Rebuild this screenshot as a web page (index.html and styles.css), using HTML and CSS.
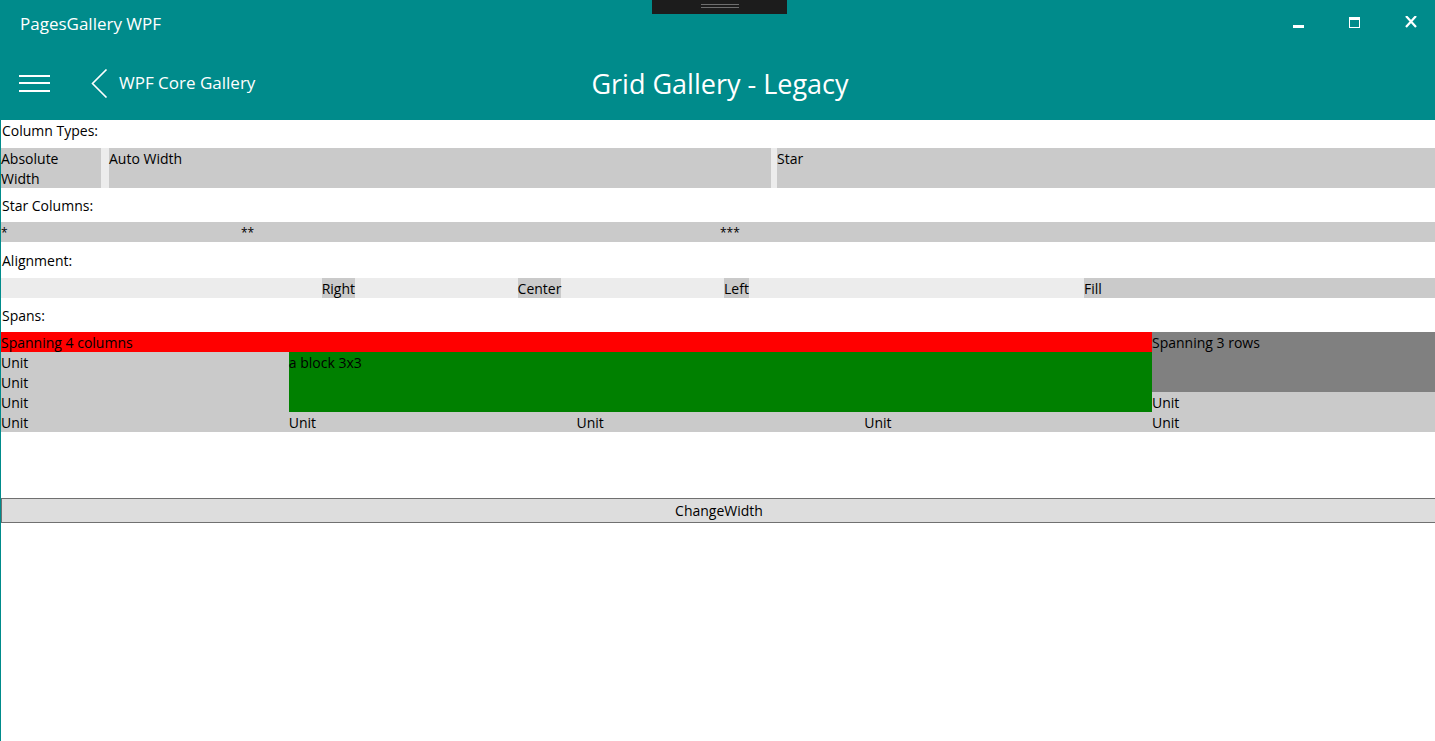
FILE: index.html
```html
<!DOCTYPE html>
<html>
<head>
<meta charset="utf-8">
<title>PagesGallery WPF</title>
<link rel="stylesheet" href="styles.css">
</head>
<body>
<div class="window">
  <header class="chrome">
    <div class="titlebar">
      <span class="app-title">PagesGallery WPF</span>
      <div class="grip"><span class="grip-line"></span><span class="grip-line"></span></div>
      <div class="controls">
        <svg class="ctl" width="12" height="12" viewBox="0 0 12 12"><rect x="0" y="9" width="11" height="3" fill="#fff"/></svg>
        <svg class="ctl" width="12" height="12" viewBox="0 0 12 12"><rect x="0.5" y="1.5" width="10" height="10" fill="none" stroke="#fff" stroke-width="1"/><rect x="0" y="1" width="11" height="3" fill="#fff"/></svg>
        <svg class="ctl" width="12" height="12" viewBox="0 0 12 12"><path d="M1 0 L11 11 M11 0 L1 11" stroke="#fff" stroke-width="2.2" fill="none"/></svg>
      </div>
    </div>
    <div class="navbar">
      <div class="nav-left">
        <svg class="hamburger" width="32" height="18" viewBox="0 0 32 18"><rect x="0" y="0" width="31" height="2" fill="#fff"/><rect x="0" y="7" width="31" height="2" fill="#fff"/><rect x="0" y="15" width="31" height="2" fill="#fff"/></svg>
        <div class="back">
          <svg class="chevron" width="17" height="29" viewBox="0 0 17 29"><polyline points="15.5,0.5 1.5,14.5 15.5,28.5" fill="none" stroke="#fff" stroke-width="1.6"/></svg>
          <span class="back-text">WPF Core Gallery</span>
        </div>
      </div>
      <div class="page-title">Grid Gallery - Legacy</div>
      <div class="nav-right"></div>
    </div>
  </header>
  <main class="content">
    <div class="label label-first">Column Types:</div>
    <div class="coltypes">
      <div class="cell cell-abs">Absolute Width</div>
      <div class="cell cell-auto">Auto Width</div>
      <div class="cell cell-star">Star</div>
    </div>
    <div class="label">Star Columns:</div>
    <div class="stars">
      <div class="txt">*</div>
      <div class="txt">**</div>
      <div class="txt">***</div>
    </div>
    <div class="label label-align">Alignment:</div>
    <div class="align">
      <div class="al al-right"><span class="chip">Right</span></div>
      <div class="al al-center"><span class="chip">Center</span></div>
      <div class="al al-left"><span class="chip">Left</span></div>
      <div class="al al-fill"><span class="chip">Fill</span></div>
    </div>
    <div class="label">Spans:</div>
    <div class="spans">
      <div class="txt sp-red">Spanning 4 columns</div>
      <div class="txt sp-rows">Spanning 3 rows</div>
      <div class="txt sp-u1">Unit</div>
      <div class="txt sp-green">a block 3x3</div>
      <div class="txt sp-u2">Unit</div>
      <div class="txt sp-u3">Unit</div>
      <div class="txt sp-u4">Unit</div>
      <div class="txt">Unit</div>
      <div class="txt">Unit</div>
      <div class="txt">Unit</div>
      <div class="txt">Unit</div>
      <div class="txt">Unit</div>
    </div>
    <button class="change">ChangeWidth</button>
  </main>
</div>
</body>
</html>
```
FILE: styles.css
```css
html, body {
  margin: 0;
  padding: 0;
  overflow: hidden;
  background: #ffffff;
}
body {
  font-family: "Open Sans", "Noto Sans", sans-serif;
  color: #000;
}
.window {
  width: 1435px;
  height: 741px;
  display: flex;
  flex-direction: column;
}
.chrome {
  background: #008b8b;
  color: #fff;
  position: relative;
}
.titlebar {
  height: 50px;
  display: flex;
  align-items: flex-start;
}
.app-title {
  font-size: 17px;
  line-height: 20px;
  padding: 14px 0 0 20px;
}
.grip {
  position: absolute;
  left: 652px;
  top: 0;
  width: 135px;
  height: 14px;
  background: #1c1c1c;
  display: flex;
  flex-direction: column;
  align-items: center;
  gap: 2px;
  padding-top: 4px;
  box-sizing: border-box;
}
.grip-line {
  display: block;
  width: 38px;
  height: 1px;
  background: #6e6e6e;
}
.controls {
  margin-left: auto;
  display: flex;
  gap: 44px;
  padding: 16px 18px 0 0;
}
.ctl { display: block; }
.navbar {
  height: 70px;
  display: grid;
  grid-template-columns: 1fr auto 1fr;
  align-items: center;
}
.nav-left {
  display: flex;
  align-items: center;
  padding-left: 19px;
}
.hamburger { display: block; margin-top: -2px; }
.back {
  display: flex;
  align-items: center;
  margin-left: 40px;
  margin-top: -4px;
}
.chevron { display: block; }
.back-text {
  font-size: 17px;
  margin-left: 11px;
  line-height: 24px;
}
.page-title {
  font-size: 27px;
  line-height: 36px;
  margin-top: -2px;
  padding-left: 5px;
}
.content {
  flex: 1;
  border-left: 1px solid #008b8b;
  font-size: 14px;
  line-height: 20px;
}
.label {
  padding: 8px 0 6px 1px;
}
.label-first { padding: 1px 0 7px 1px; }
.label-align { padding: 9px 0 7px 1px; }
.txt {
  box-sizing: border-box;
  padding-top: 1px;
}
.coltypes {
  display: grid;
  grid-template-columns: 100px 670px 1fr;
  background: #ececec;
}
.cell {
  background: #cacaca;
  height: 40px;
  box-sizing: border-box;
  padding-top: 1px;
}
.cell-abs { padding-right: 6px; }
.cell-auto { margin-left: 8px; }
.cell-star { margin-left: 6px; }
.stars {
  display: grid;
  grid-template-columns: 240px 479px 1fr;
  background: #cacaca;
  height: 20px;
  font-size: 12px;
}
.align {
  display: grid;
  grid-template-columns: 354px 369px 360px 1fr;
  background: #ececec;
  height: 20px;
}
.al {
  display: flex;
  box-sizing: border-box;
  height: 20px;
}
.chip {
  background: #cacaca;
  display: block;
  height: 20px;
  padding-top: 1px;
  box-sizing: border-box;
}
.al-right { justify-content: flex-end; }
.al-center { justify-content: center; }
.al-left { justify-content: flex-start; }
.al-fill { background: #cacaca; }
.spans {
  display: grid;
  grid-template-columns: repeat(4, 287.75px) 1fr;
  grid-auto-rows: 20px;
  background: #cacaca;
}
.sp-red {
  grid-column: 1 / 5;
  grid-row: 1;
  background: #ff0000;
}
.sp-rows {
  grid-column: 5;
  grid-row: 1 / 4;
  background: #808080;
}
.sp-u1 { grid-column: 1; grid-row: 2; }
.sp-green {
  grid-column: 2 / 5;
  grid-row: 2 / 5;
  background: #008000;
}
.sp-u2 { grid-column: 1; grid-row: 3; }
.sp-u3 { grid-column: 1; grid-row: 4; }
.sp-u4 { grid-column: 5; grid-row: 4; }
.change {
  display: block;
  margin-top: 66px;
  width: calc(100% + 2px);
  height: 25px;
  border: 1px solid #707070;
  background: #dddddd;
  font-family: inherit;
  font-size: 14px;
  color: #000;
  padding: 0;
  line-height: 20px;
}
```
